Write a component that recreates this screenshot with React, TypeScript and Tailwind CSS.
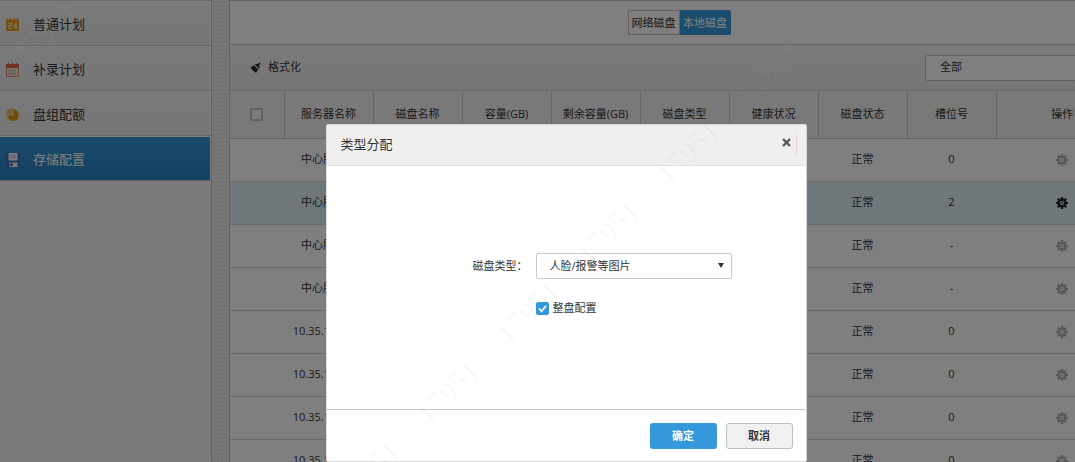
import React, { useState } from "react";
import { clsx } from "clsx";

const menu = [
  { name: "普通计划", icon: <DayIcon /> },
  { name: "补录计划", icon: <CalendarIcon /> },
  { name: "盘组配额", icon: <PieIcon /> },
  { name: "存储配置", icon: <DiskIcon /> },
];

const columns = [
  "服务器名称",
  "磁盘名称",
  "容量(GB)",
  "剩余容量(GB)",
  "磁盘类型",
  "健康状况",
  "磁盘状态",
  "槽位号",
];

const disks = [
  { server: "中心服务器", slot: "0" },
  { server: "中心服务器", slot: "2" },
  { server: "中心服务器", slot: "-" },
  { server: "中心服务器", slot: "-" },
  { server: "10.35.146.211", slot: "0" },
  { server: "10.35.146.211", slot: "0" },
  { server: "10.35.146.211", slot: "0" },
  { server: "10.35.146.211", slot: "0" },
];

// centre points of the watermark stamps
const stamps = [
  { x: 45, y: 32, light: true },
  { x: 368, y: 472, light: false },
  { x: 448, y: 392, light: false },
  { x: 528, y: 312, light: false },
  { x: 608, y: 232, light: false },
  { x: 688, y: 152, light: false },
  { x: 768, y: 72, light: true },
  { x: 848, y: -8, light: true },
];

function DayIcon() {
  return (
    <svg viewBox="0 0 13 13" className="h-[13px] w-[13px]">
      <path d="M0 1.5h1V0h1v1.5h2V0h1v1.5h3V0h1v1.5h2V0h1v1.5h1V12a1 1 0 0 1-1 1H1a1 1 0 0 1-1-1z" fill="#e8a020" />
      <path d="M2 5.2h3.4v2.4H2.5v2.6h3.4M10 11V5.2L7.3 8.9h4" fill="none" stroke="#fff3d6" />
    </svg>
  );
}

function CalendarIcon() {
  return (
    <svg viewBox="0 0 13 14" className="h-[14px] w-[13px]">
      <path d="M.5 4v9.5h12V4" fill="#f4e6e0" stroke="#e08468" />
      <path d="M0 1h2V0h1v1h3V0h1v1h3V0h1v1h2v4H0z" fill="#dd6645" />
      <path d="M3.5 6.5v5M9.5 6.5v5" stroke="#d9a860" strokeWidth="1.5" strokeDasharray="2 1" />
      <path d="M6.5 6.5v5" stroke="#7fb069" strokeWidth="1.5" strokeDasharray="2 1" />
    </svg>
  );
}

function PieIcon() {
  return (
    <svg viewBox="0 0 13 13" className="h-[13px] w-[13px]">
      <path d="M7.2 1A6 6 0 1 1 1 8.2L1 7.2h6.2z" fill="#e59b1c" />
      <path d="M6.4 0v6.4H0A6.4 6.4 0 0 1 6.4 0z" fill="#efbe6c" />
    </svg>
  );
}

function DiskIcon() {
  return (
    <svg viewBox="0 0 14 14" className="h-[14px] w-[14px]">
      <path d="M0 1a1 1 0 0 1 1-1h12a1 1 0 0 1 1 1v13H1l-1-1z" fill="#4068b8" />
      <path d="M2.5 0h9v7.5h-9z" fill="#f4f7fb" />
      <path d="M4 2.5h6M4 4.5h6" stroke="#b9c4d4" />
      <path d="M3.5 9.5h8V14h-8z" fill="#eef2f8" />
      <path d="M4.5 10.5h2V13h-2z" fill="#1d3568" />
    </svg>
  );
}

function BrushIcon() {
  return (
    <svg viewBox="0 0 11 12" className="h-3 w-[11px]">
      <path d="M9.6.6 10.6 1.8 9 3.6 9.6 5.4 8.8 6.4 4.8 2.6 6 1.8 7.6 2.2z" fill="#26262e" />
      <path d="M4 3.2 8.2 7.2 6 11 4.6 9.6 3.8 9.8 3.4 8.4 2 8 1.8 6.8 0 6z" fill="#26262e" />
    </svg>
  );
}

function GearIcon() {
  return (
    <svg viewBox="0 0 12 12" className="h-3 w-3">
      <path
        d="M6 0v3M6 9v3M0 6h3M9 6h3M1.7 1.7 4 4M8 8l2.3 2.3M1.7 10.3 4 8M8 4l2.3-2.3"
        stroke="currentColor"
        strokeWidth="2.2"
      />
      <circle cx="6" cy="6" r="3.3" fill="none" stroke="currentColor" strokeWidth="2.8" />
      <circle cx="6" cy="6" r="0.9" fill="currentColor" />
    </svg>
  );
}

const Sidebar = () => (
  <nav className="w-[212px] shrink-0 border-r border-[#c4c4c4] bg-[#f2f2f2]">
    <ul className="border-t border-[#d0d0d0]">
      {menu.map(({ name, icon }, idx) => (
        <li key={name} className="border-b border-[#cfcfcf]">
          <a
            href="#"
            className={clsx(
              "flex h-11 items-center border-t border-r border-white pl-[6px] pt-[2px] text-[13px]",
              idx === 3
                ? "bg-linear-to-b from-[#3498db] to-[#2480bd] text-white"
                : "bg-linear-to-b from-[#f5f5f5] to-[#ececec] text-[#333]"
            )}
          >
            <span className="w-[27px]">{icon}</span>
            {name}
          </a>
        </li>
      ))}
    </ul>
  </nav>
);

const DiskTable = () => (
  <table className="w-full table-fixed border-collapse text-center text-[11px] text-[#333]">
    <colgroup>
      <col className="w-[54px]" />
      {columns.map((name) => (
        <col key={name} className="w-[89px]" />
      ))}
      <col />
    </colgroup>
    <thead>
      <tr className="h-[47px] border-b border-[#cacaca] bg-[#f2f2f2]">
        <th>
          <input
            type="checkbox"
            aria-label="全选"
            className="mx-auto block h-[13px] w-[13px] appearance-none rounded-xs border-2 border-[#b9c4ca] bg-[#f8f8f8]"
          />
        </th>
        {columns.map((name) => (
          <th key={name} className="border-l border-[#cacaca] font-normal">
            {name}
          </th>
        ))}
        <th className="border-l border-[#cacaca] font-normal">操作</th>
      </tr>
    </thead>
    <tbody>
      {disks.map(({ server, slot }, idx) => (
        <tr key={idx} className={clsx("h-[43px] border-b border-[#d6d6d6]", idx === 1 && "bg-[#e0eef7]")}>
          <td />
          <td>{server}</td>
          <td />
          <td />
          <td />
          <td />
          <td />
          <td>正常</td>
          <td>{slot}</td>
          <td>
            <button
              type="button"
              aria-label="操作"
              className={clsx("mx-auto block", idx === 1 ? "text-[#26262e]" : "text-[#b4b4b4]")}
            >
              <GearIcon />
            </button>
          </td>
        </tr>
      ))}
    </tbody>
  </table>
);

const Dialog = () => {
  const [whole, setWhole] = useState(true);

  return (
    <div
      role="dialog"
      aria-labelledby="dialog-title"
      className="w-[481px] overflow-hidden rounded-xs border border-[#d8d8d8] bg-white text-[11px] text-[#333]"
    >
      <header className="flex h-[41px] items-center border-b border-[#e2e2e2] bg-[#efefef] pl-[14px] pr-[9px]">
        <h2 id="dialog-title" className="flex-1 text-[13px]">
          类型分配
        </h2>
        <button type="button" aria-label="关闭" className="border-r border-[#f0d4d4] pb-[9px] pr-[5px] pt-1">
          <svg viewBox="0 0 9 9" className="h-[9px] w-[9px]">
            <path d="m1 1 7 7M8 1 1 8" stroke="#555" strokeWidth="2.4" />
          </svg>
        </button>
      </header>
      {/* Form */}
      <div className="flex h-[243px] flex-col gap-4 pl-[146px] pt-[87px]">
        <div className="flex items-center">
          <label htmlFor="disk-type" className="w-[63px]">
            磁盘类型：
          </label>
          <div className="relative">
            <select
              id="disk-type"
              className="h-[26px] w-[196px] appearance-none rounded-xs border border-[#c8c8c8] bg-white pl-[13px]"
            >
              <option>人脸/报警等图片</option>
            </select>
            <svg viewBox="0 0 6 5" className="pointer-events-none absolute right-2 top-[10px] h-[5px] w-[6px]">
              <path d="M0 0h6L3 5z" fill="#333" />
            </svg>
          </div>
        </div>
        <label className="flex items-center gap-1 pl-[63px] leading-[26px]">
          <span className="relative block h-[13px] w-[13px]">
            <input
              type="checkbox"
              checked={whole}
              onChange={(e) => setWhole(e.target.checked)}
              className="peer block h-[13px] w-[13px] appearance-none rounded-xs border border-[#3498db] checked:bg-[#3498db]"
            />
            <svg
              viewBox="0 0 13 13"
              className="pointer-events-none absolute inset-0 hidden h-[13px] w-[13px] peer-checked:block"
            >
              <path d="m3 6.5 2.6 2.7L10 3.8" fill="none" stroke="#fff" strokeWidth="1.8" />
            </svg>
          </span>
          整盘配置
        </label>
      </div>
      <footer className="flex h-[52px] items-center justify-end gap-[9px] border-t border-[#c8c8c8] pr-[13px] font-bold">
        <button type="button" className="h-[26px] w-[67px] rounded-[3px] bg-[#3498db] pt-[2px] text-white">
          确定
        </button>
        <button
          type="button"
          className="h-[26px] w-[67px] rounded-[3px] border border-[#c0c0c0] bg-[#f0f0f0] pt-[2px]"
        >
          取消
        </button>
      </footer>
    </div>
  );
};

const Watermark = () => (
  <div aria-hidden="true" className="pointer-events-none absolute inset-0 overflow-hidden">
    {stamps.map(({ x, y, light }) => (
      <span
        key={x}
        style={{ left: x, top: y }}
        className={clsx(
          "absolute -translate-x-1/2 -translate-y-1/2 -rotate-45 font-['Liberation_Serif',serif] text-[30px] leading-none",
          light ? "text-white/[0.03]" : "text-black/[0.03]"
        )}
      >
        17951
      </span>
    ))}
  </div>
);

export default function App() {
  return (
    <div className="h-screen overflow-hidden font-['Open_Sans','Noto_Sans_CJK_SC',sans-serif]">
      <div className="relative flex h-full min-w-[1132px] bg-[#f0f0f0]">
        <Sidebar />
        <div className="w-[17px] shrink-0 bg-[#ececec] bg-[radial-gradient(#e0e0e0_1px,transparent_1px)] bg-size-[4px_4px]" />
        <main className="min-w-0 flex-1 border-l border-t border-[#c4c4c4] bg-white pr-1">
          {/* Disk tabs */}
          <div className="flex h-11 items-center justify-center border-b border-[#c8c8c8] text-[11px] text-[#333]">
            <button type="button" className="h-[25px] w-[52px] rounded-l-xs border border-[#c0c0c0] pt-[2px]">
              网络磁盘
            </button>
            <button type="button" className="h-[25px] w-[51px] rounded-r-xs bg-[#3498db] pt-[2px] text-white">
              本地磁盘
            </button>
          </div>
          {/* Toolbar */}
          <div className="flex h-[46px] items-center border-b border-[#d0d0d0] bg-linear-to-b from-[#f5f5f5] to-[#ececec] pl-5 text-[11px] text-[#333]">
            <button type="button" className="flex items-center gap-[7px]">
              <BrushIcon />
              格式化
            </button>
            <select
              aria-label="磁盘筛选"
              className="ml-auto mr-[10px] h-[26px] w-[193px] appearance-none rounded-xs border border-[#c4c4c4] bg-white pl-[14px]"
            >
              <option>全部</option>
            </select>
          </div>
          <DiskTable />
        </main>
        <div className="absolute inset-0 flex items-start justify-center overflow-hidden bg-black/50 pt-[124px]">
          <Dialog />
        </div>
        <Watermark />
      </div>
    </div>
  );
}
